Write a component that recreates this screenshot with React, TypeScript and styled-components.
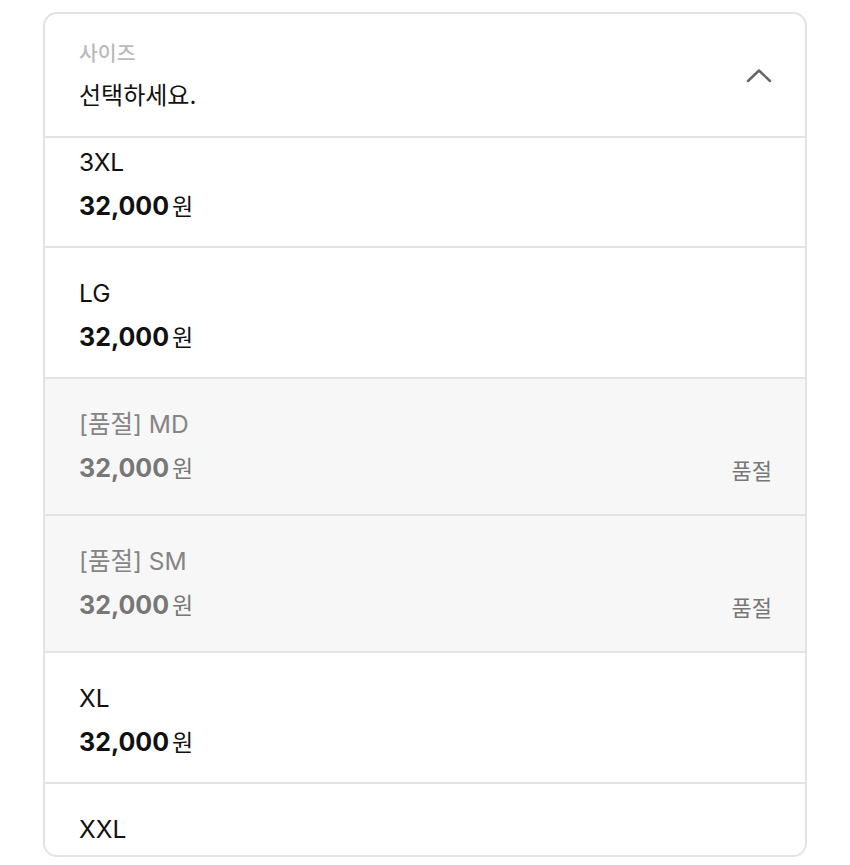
import { useLayoutEffect, useRef } from "react";
import styled, { createGlobalStyle } from "styled-components";

const GlobalStyle = createGlobalStyle`
  body {
    margin: 0;
    background: #ffffff;
    font-family: Inter, "Noto Sans CJK KR", sans-serif;
    -webkit-font-smoothing: antialiased;
  }
`;

type Option = {
  name: string;
  price: string;
  soldOut?: boolean;
};

const options: Option[] = [
  { name: "3XL", price: "32,000" },
  { name: "LG", price: "32,000" },
  { name: "[품절] MD", price: "32,000", soldOut: true },
  { name: "[품절] SM", price: "32,000", soldOut: true },
  { name: "XL", price: "32,000" },
  { name: "XXL", price: "32,000" },
];

const SizeSelect = () => {
  const listRef = useRef<HTMLUListElement>(null);

  // the list is open and already scrolled a bit
  useLayoutEffect(() => {
    if (listRef.current) listRef.current.scrollTop = 21;
  }, []);

  return (
    <Box>
      <Header>
        <HeaderText>
          <Label>사이즈</Label>
          <Value>선택하세요.</Value>
        </HeaderText>
        <Chevron width="26" height="15" viewBox="0 0 26 15">
          <polyline points="2,13 13,2.5 24,13" />
        </Chevron>
      </Header>

      <List ref={listRef}>
        {options.map((item) => (
          <Row key={item.name} $soldOut={item.soldOut}>
            <Info>
              <Name $soldOut={item.soldOut}>{item.name}</Name>
              <Price $soldOut={item.soldOut}>
                {item.price}
                <Won>원</Won>
              </Price>
            </Info>
            {item.soldOut && <SoldOutTag>품절</SoldOutTag>}
          </Row>
        ))}
      </List>
    </Box>
  );
};

const Box = styled.div`
  box-sizing: border-box;
  margin: 12px 43px 0;
  height: 845px;
  border: 2px solid #e3e3e3;
  border-radius: 14px;
  overflow: hidden;
  display: flex;
  flex-direction: column;
  background: #fff;
`;

const Header = styled.div`
  flex: none;
  display: flex;
  align-items: center;
  justify-content: space-between;
  padding: 26px 33px 23px 34px;
  border-bottom: 2px solid #e3e3e3;
`;

const HeaderText = styled.div`
  display: flex;
  flex-direction: column;
  gap: 11px;
`;

const Label = styled.span`
  font-size: 20.5px;
  line-height: 28px;
  font-weight: 500;
  color: #bababa;
`;

const Value = styled.span`
  font-size: 24px;
  line-height: 34px;
  color: #111;
`;

const Chevron = styled.svg`
  margin-top: -2px;
  fill: none;
  stroke: #666;
  stroke-width: 2.5;
  stroke-linecap: round;
  stroke-linejoin: round;
`;

const List = styled.ul`
  flex: 1;
  margin: 0;
  padding: 0;
  list-style: none;
  overflow-y: auto;
  scrollbar-width: none;

  &::-webkit-scrollbar {
    display: none;
  }
`;

const Row = styled.li<{ $soldOut?: boolean }>`
  display: flex;
  justify-content: space-between;
  align-items: flex-start;
  padding: 28px 33px 22px 34px;
  background: ${(p) => (p.$soldOut ? "#f7f7f7" : "#fff")};
  border-bottom: 2px solid #e3e3e3;

  &:last-child {
    border-bottom: none;
  }
`;

const Info = styled.div`
  display: flex;
  flex-direction: column;
  gap: 10px;
`;

const Name = styled.span<{ $soldOut?: boolean }>`
  font-size: 24.5px;
  line-height: 34px;
  color: ${(p) => (p.$soldOut ? "#858585" : "#111")};
`;

const Price = styled.span<{ $soldOut?: boolean }>`
  font-size: 25px;
  line-height: 34px;
  font-weight: 700;
  color: ${(p) => (p.$soldOut ? "#777" : "#111")};
`;

const Won = styled.span`
  margin-left: 3px;
  font-size: 23px;
  font-weight: 400;
`;

const SoldOutTag = styled.span`
  margin-top: 44px;
  font-size: 22px;
  line-height: 41px;
  color: #777;
`;

export default function App() {
  return (
    <>
      <GlobalStyle />
      <SizeSelect />
    </>
  );
}
